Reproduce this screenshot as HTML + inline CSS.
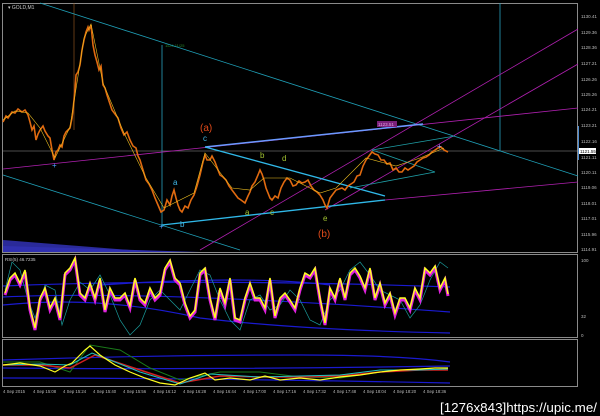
<!DOCTYPE html>
<html><head><meta charset="utf-8"><style>
html,body{margin:0;padding:0;background:#000;width:600px;height:416px;overflow:hidden}
svg{display:block}
text{font-family:"Liberation Sans",sans-serif}
</style></head><body>
<svg width="600" height="416" viewBox="0 0 600 416" xmlns="http://www.w3.org/2000/svg">
<rect width="600" height="416" fill="#000"/>
<rect x="2.5" y="3.5" width="575" height="249" fill="none" stroke="#8a8a8a"/>
<rect x="2.5" y="254.5" width="575" height="83" fill="none" stroke="#8a8a8a"/>
<rect x="2.5" y="339.5" width="575" height="47" fill="none" stroke="#8a8a8a"/>
<polygon points="3,240 130,250 3,252" fill="#2a2a9a"/>
<polygon points="3,246 200,252 3,252" fill="#3030b0"/>
<text x="8" y="9" font-size="5" fill="#ccc">▾ GOLD,M1</text>
<line x1="3" y1="151" x2="578" y2="151" stroke="#9a9a9a" stroke-width="0.6"/>
<line x1="162" y1="45" x2="162" y2="225" stroke="#2aa0c0" stroke-width="0.8"/>
<line x1="500" y1="3" x2="500" y2="151" stroke="#2aa0c0" stroke-width="0.8"/>
<line x1="74" y1="3" x2="74" y2="130" stroke="#a06020" stroke-width="0.6"/>
<text x="165" y="47" font-size="4" fill="#2a8a2a">1124.11/25</text>
<line x1="40" y1="3" x2="578" y2="176" stroke="#1fa0b8" stroke-width="0.8"/>
<line x1="3" y1="175" x2="240" y2="250" stroke="#1fa0b8" stroke-width="0.8"/>
<line x1="3" y1="169" x2="210" y2="147" stroke="#b020b0" stroke-width="0.8"/>
<line x1="210" y1="147" x2="578" y2="108" stroke="#b020b0" stroke-width="0.8"/>
<line x1="200" y1="250" x2="578" y2="29" stroke="#b020b0" stroke-width="0.8"/>
<line x1="325" y1="210" x2="578" y2="64" stroke="#b020b0" stroke-width="0.8"/>
<line x1="385" y1="200" x2="578" y2="182" stroke="#b020b0" stroke-width="0.8"/>
<line x1="205" y1="147" x2="423" y2="124" stroke="#6a9aff" stroke-width="1.5"/>
<line x1="205" y1="147" x2="385" y2="196" stroke="#30b8e8" stroke-width="1.3"/>
<line x1="162" y1="225" x2="385" y2="200" stroke="#30b8e8" stroke-width="1.3"/>
<line x1="372" y1="150" x2="455" y2="136" stroke="#1fa0a8" stroke-width="0.8"/>
<line x1="372" y1="150" x2="435" y2="172" stroke="#1fa0a8" stroke-width="0.8"/>
<line x1="350" y1="188" x2="435" y2="172" stroke="#1fa0a8" stroke-width="0.8"/>
<rect x="377" y="121" width="20" height="6" fill="#7a207a"/>
<text x="378" y="126" font-size="4.5" fill="#e0a0e0">1123.51</text>
<polyline fill="none" stroke="#e06a10" stroke-width="1.6" points="3,122 6,116 8,118 12,112 15,113 18,109 22,112 25,110 28,115 30,122 32,130 34,126 36,140 38,134 40,130 43,126 45,131 48,136 50,138 52,150 54,160 56,152 58,150 60,145 62,147 64,136 66,132 68,130 70,128 72,118 73,110 75,90 76,75 78,72 80,65 82,50 84,40 86,32 88,27 89,30 91,25 93,45 95,55 97,62 99,70 101,66 103,85 105,88 107,95 110,104 112,110 115,114 118,118 121,128 124,135 127,132 130,140 133,146 136,148 138,156 140,160 143,170 146,180 149,184 152,190 155,198 158,205 161,212 164,210 167,200 170,205 172,196 174,190 176,198 178,205 180,210 182,212 185,206 188,208 191,200 194,195 197,186 200,175 203,162 205,155 207,160 210,160 212,156 215,162 218,170 220,175 223,177 226,180 229,186 232,190 235,194 238,198 241,200 245,203 248,196 250,192 252,186 255,182 258,175 260,170 262,174 264,180 266,188 268,193 270,198 272,200 275,196 278,198 281,188 284,182 287,178 290,180 293,186 296,185 299,181 302,183 305,182 308,180 311,186 314,190 317,192 320,195 323,200 325,205 327,208 330,198 333,194 336,190 339,189 342,188 345,190 348,186 351,184 354,182 357,176 360,175 363,166 366,160 369,156 372,152 375,154 378,155 381,160 384,160 387,164 390,163 393,170 396,168 399,172 402,172 405,168 408,170 411,168 414,166 417,162 420,160 423,158 426,157 429,155 432,152 435,150 438,148 441,147 444,150 446,151 448,152"/>
<polyline fill="none" stroke="#f0c020" stroke-width="0.6" points="3,120 15,111 28,113 40,128 55,158 70,127 84,38 91,24 103,83 124,133 146,178 164,208 194,193 205,153 232,188 250,190 264,178 290,178 320,193 336,188 366,158 396,166 420,158 444,148"/>
<text x="52" y="168" font-size="8" fill="#4aa0ff">+</text>
<text x="159" y="229" font-size="8" fill="#4aa0ff">+</text>
<text x="437" y="149" font-size="8" fill="#9aa0ff">+</text>
<text x="200" y="131" font-size="10" fill="#e04a1a">(a)</text>
<text x="203" y="141" font-size="8" fill="#40b8e8">c</text>
<text x="173" y="185" font-size="8" fill="#40b8e8">a</text>
<text x="180" y="227" font-size="8" fill="#40b8e8">b</text>
<text x="260" y="158" font-size="8" fill="#a0c030">b</text>
<text x="282" y="161" font-size="8" fill="#a0c030">d</text>
<text x="245" y="215" font-size="8" fill="#a0c030">a</text>
<text x="270" y="215" font-size="8" fill="#a0c030">c</text>
<text x="323" y="221" font-size="8" fill="#a0c030">e</text>
<text x="318" y="237" font-size="10" fill="#e04a1a">(b)</text>
<g font-size="4.5" fill="#bbb">
<text x="581" y="18">1130.41</text><text x="581" y="34">1129.36</text><text x="581" y="49">1128.36</text>
<text x="581" y="65">1127.21</text><text x="581" y="81">1126.26</text><text x="581" y="96">1125.26</text>
<text x="581" y="111">1124.21</text><text x="581" y="127">1123.21</text><text x="581" y="143">1122.16</text>
<text x="581" y="159">1121.11</text>
<text x="581" y="174">1120.11</text><text x="581" y="189">1119.06</text><text x="581" y="205">1118.01</text>
<text x="581" y="220">1117.01</text><text x="581" y="236">1115.96</text>
<text x="581" y="251">1114.91</text>
<text x="581" y="262">100</text><text x="581" y="318">32</text><text x="581" y="337">0</text>
</g>
<rect x="579" y="148" width="17" height="6" fill="#fff"/>
<text x="580" y="153" font-size="4.5" fill="#000">1121.55</text>
<line x1="578.5" y1="126" x2="578.5" y2="160" stroke="#4a8ad0" stroke-width="1"/>
<text x="5" y="261" font-size="4.5" fill="#ccc">RSI(5) 46.7235</text>
<g fill="none" stroke="#1a1ad0" stroke-width="1.2">
<path d="M3,286 Q200,278 450,287"/>
<path d="M3,297 Q150,290 450,312"/>
<path d="M3,305 Q100,295 200,318 Q300,330 450,333"/>
<path d="M100,285 Q250,275 330,285"/>
</g>
<polyline fill="none" stroke="#1a9a9a" stroke-width="0.7" points="5,290 12,262 20,270 28,300 35,318 45,285 55,290 62,325 70,300 80,282 90,290 100,275 110,295 120,320 130,335 140,325 150,300 160,290 170,300 180,310 190,290 200,270 210,275 220,300 230,320 240,330 250,300 260,295 270,310 280,305 290,290 300,300 310,320 320,325 330,300 340,290 350,270 360,262 370,275 380,290 390,295 400,300 410,318 420,305 430,280 440,262 448,268"/>
<polyline fill="none" stroke="#e020e0" stroke-width="3" points="5,295 10,280 15,275 20,285 25,272 30,310 35,330 40,300 45,290 50,310 55,300 60,320 65,275 70,270 75,260 80,295 85,300 90,285 95,300 100,280 105,312 110,290 115,300 120,300 125,295 130,308 135,280 140,300 145,305 150,290 155,300 160,295 165,270 170,262 175,280 180,285 185,305 190,318 195,312 200,275 205,270 210,300 215,320 220,290 225,305 230,280 235,320 240,322 245,300 250,285 255,300 260,300 265,310 270,280 275,318 280,300 285,295 290,302 295,310 300,290 305,275 310,278 315,270 320,300 325,325 330,290 335,300 340,280 345,300 350,275 355,270 360,278 365,290 370,270 375,300 380,285 385,305 390,295 395,315 400,300 405,300 410,310 415,290 420,300 425,270 430,275 435,268 440,290 445,280 448,296"/>
<polyline fill="none" stroke="#ffff20" stroke-width="1.5" points="5,293 10,278 15,273 20,283 25,270 30,308 35,328 40,298 45,288 50,308 55,298 60,318 65,273 70,268 75,258 80,293 85,298 90,283 95,298 100,278 105,310 110,288 115,298 120,298 125,293 130,306 135,278 140,298 145,303 150,288 155,298 160,293 165,268 170,260 175,278 180,283 185,303 190,316 195,310 200,273 205,268 210,298 215,318 220,288 225,303 230,278 235,318 240,320 245,298 250,283 255,298 260,298 265,308 270,278 275,316 280,298 285,293 290,300 295,308 300,288 305,273 310,276 315,268 320,298 325,323 330,288 335,298 340,278 345,298 350,273 355,268 360,276 365,288 370,268 375,298 380,283 385,303 390,293 395,313 400,298 405,298 410,308 415,288 420,298 425,268 430,273 435,266 440,288 445,278 448,294"/>
<g fill="none" stroke-width="1">
<path d="M3,360 Q150,355 300,355 Q400,355 450,362" stroke="#1a1ad0" stroke-width="1.2"/>
<path d="M3,368 Q200,370 450,366" stroke="#1a1ad0" stroke-width="1.2"/>
<path d="M3,378 Q200,378 450,383" stroke="#1a1ad0" stroke-width="1.2"/>
<polyline stroke="#1a7a1a" points="3,362 40,362 70,372 90,345 120,350 150,368 180,380 220,372 260,372 300,377 340,378 380,372 420,370 448,370"/>
<polyline stroke="#d02020" stroke-width="1.5" points="3,365 40,365 70,368 95,355 110,360 140,370 180,383 220,376 260,377 300,377 340,376 380,372 420,370 448,370"/>
<polyline stroke="#20c0c0" points="3,365 40,364 70,365 92,353 110,360 140,372 180,384 210,374 260,377 300,376 340,375 380,370 420,370 448,369"/>
<polyline stroke="#ffff20" stroke-width="1.2" points="3,365 20,363 40,366 55,372 65,366 72,363 85,350 90,346 100,355 115,365 130,372 145,378 160,383 175,385 190,378 205,373 215,380 230,378 250,380 265,376 280,380 300,378 320,380 340,377 360,375 380,372 400,370 420,369 435,368 448,368"/>
</g>
<g font-size="4.3" fill="#bbb">
<text x="3" y="393">4 Sep 2015</text><text x="33" y="393">4 Sep 15:08</text><text x="63" y="393">4 Sep 15:24</text>
<text x="93" y="393">4 Sep 15:40</text><text x="123" y="393">4 Sep 15:56</text><text x="153" y="393">4 Sep 16:12</text>
<text x="183" y="393">4 Sep 16:28</text><text x="213" y="393">4 Sep 16:44</text><text x="243" y="393">4 Sep 17:00</text>
<text x="273" y="393">4 Sep 17:16</text><text x="303" y="393">4 Sep 17:32</text><text x="333" y="393">4 Sep 17:48</text>
<text x="363" y="393">4 Sep 18:04</text><text x="393" y="393">4 Sep 18:20</text><text x="423" y="393">4 Sep 18:36</text>
</g>
<text x="440" y="412" font-size="12.5" fill="#fff" textLength="157" lengthAdjust="spacingAndGlyphs">[1276x843]https://upic.me/</text>
</svg>
</body></html>
